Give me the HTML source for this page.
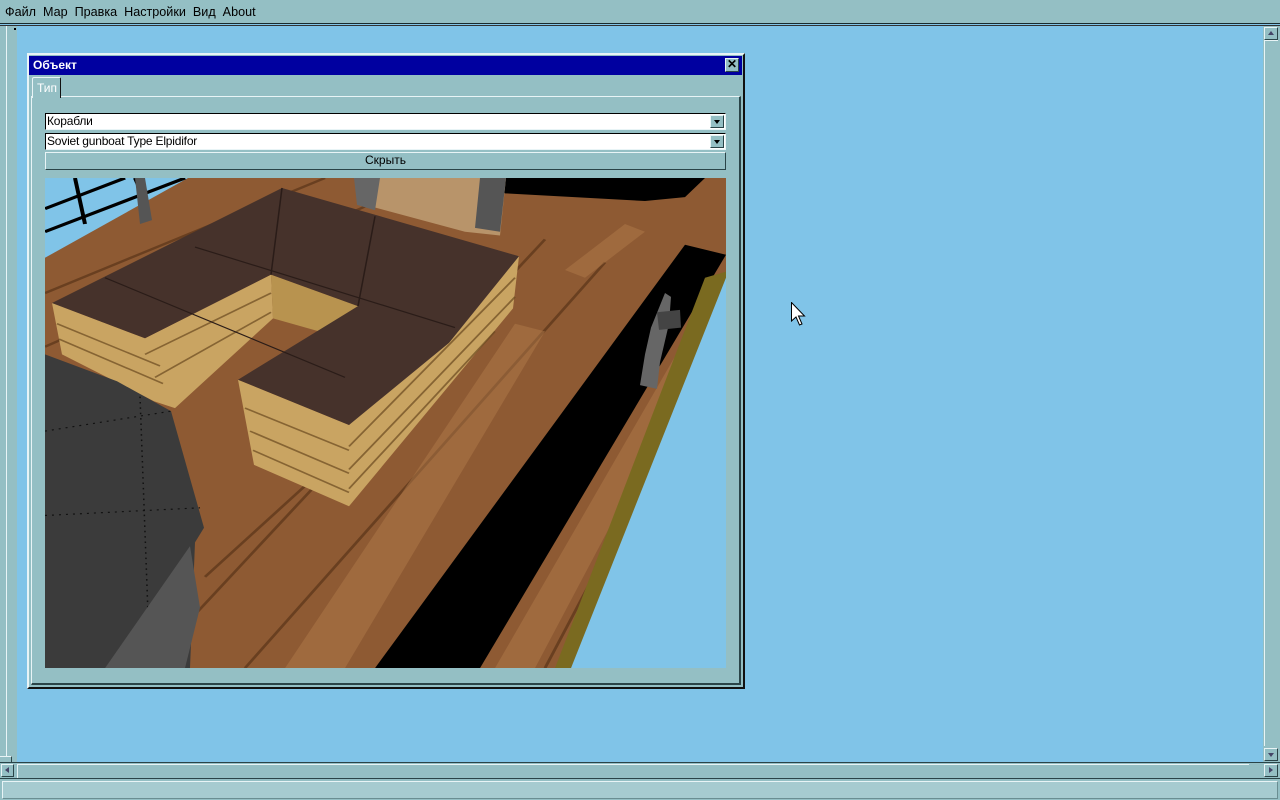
<!DOCTYPE html>
<html><head><meta charset="utf-8"><style>
*{margin:0;padding:0;box-sizing:border-box}
body{width:1280px;height:800px;position:relative;overflow:hidden;background:#80c4e8;font-family:"Liberation Sans",sans-serif;font-size:12px}
.a{position:absolute}
.t{background:#94bfc4}
.raise{border-top:1px solid #e8f4f6;border-left:1px solid #e8f4f6;border-right:1px solid #2a4448;border-bottom:1px solid #2a4448}
.combo{background:#fff;border-top:1px solid #000;border-left:1px solid #000;border-right:1px solid #e8f4f6;border-bottom:1px solid #e8f4f6;font-size:12px;line-height:14px;padding-left:1px;color:#000;letter-spacing:-0.2px}
.dd{position:absolute;right:1px;top:1px;width:14px;height:13px;background:#94bfc4;border-top:1px solid #e8f4f6;border-left:1px solid #e8f4f6;border-right:1px solid #2a4448;border-bottom:1px solid #2a4448}
.dd:after{content:"";position:absolute;left:3px;top:4px;border-left:3px solid transparent;border-right:3px solid transparent;border-top:4px solid #000}
</style></head><body>
<div class="a t" style="left:0;top:0;width:1280px;height:24px;border-bottom:1px solid #1a2a2c"></div>
<div class="a" style="left:5px;top:5px;font-size:12.6px;color:#000;white-space:nowrap">Файл&nbsp; Мар&nbsp; Правка&nbsp; Настройки&nbsp; Вид&nbsp; About</div>
<div class="a" style="left:0;top:25px;width:1280px;height:1px;background:#333"></div>
<div class="a t" style="left:0;top:26px;width:17px;height:737px"></div>
<div class="a" style="left:6px;top:26px;width:1px;height:730px;background:#e8f4f6"></div>
<div class="a" style="left:0;top:756px;width:12px;height:6px;border-top:1px solid #e8f4f6;border-right:1px solid #2a4448"></div>
<div class="a" style="left:14px;top:28px;width:2px;height:2px;background:#000"></div>
<div class="a t" style="left:1263px;top:26px;width:17px;height:737px"></div>
<div class="a t raise" style="left:1264px;top:27px;width:14px;height:13px"></div>
<div class="a" style="left:1268px;top:31px;border-left:3px solid transparent;border-right:3px solid transparent;border-bottom:4px solid #446"></div>
<div class="a t" style="left:1264px;top:40px;width:14px;height:706px;border-left:1px solid #e8f4f6;border-top:1px solid #e8f4f6"></div>
<div class="a t raise" style="left:1264px;top:748px;width:14px;height:13px"></div>
<div class="a" style="left:1268px;top:753px;border-left:3px solid transparent;border-right:3px solid transparent;border-top:4px solid #446"></div>
<div class="a t" style="left:0;top:762px;width:1280px;height:17px;border-top:1px solid #2a4448;border-bottom:1px solid #2a4448"></div>
<div class="a t raise" style="left:1px;top:764px;width:13px;height:13px"></div>
<div class="a" style="left:5px;top:767px;border-top:3px solid transparent;border-bottom:3px solid transparent;border-right:4px solid #446"></div>
<div class="a t" style="left:17px;top:764px;width:1232px;height:14px;border-left:1px solid #e8f4f6;border-top:1px solid #e8f4f6"></div>
<div class="a t raise" style="left:1264px;top:764px;width:14px;height:13px"></div>
<div class="a" style="left:1269px;top:767px;border-top:3px solid transparent;border-bottom:3px solid transparent;border-left:4px solid #446"></div>
<div class="a" style="left:0;top:779px;width:1280px;height:21px;background:#94bfc4"></div>
<div class="a" style="left:2px;top:781px;width:1276px;height:18px;background:#a6cbd0;border-top:1px solid #e8f4f6;border-left:1px solid #e8f4f6;border-right:1px solid #6a8e92;border-bottom:1px solid #6a8e92"></div>

<div class="a t" style="left:27px;top:53px;width:718px;height:636px;border-top:2px solid #e8f4f6;border-left:2px solid #e8f4f6;border-right:2px solid #111;border-bottom:2px solid #111"></div>
<div class="a" style="left:29px;top:56px;width:713px;height:19px;background:#0000a0"></div>
<div class="a" style="left:33px;top:58px;color:#fff;font-weight:bold;font-size:12px">Объект</div>
<div class="a t raise" style="left:725px;top:58px;width:14px;height:14px;font-weight:bold;font-size:12px;line-height:11px;text-align:center;color:#000">✕</div>
<div class="a t" style="left:31px;top:96px;width:710px;height:589px;border-top:1px solid #e8f4f6;border-left:1px solid #e8f4f6;border-right:2px solid #2a4448;border-bottom:2px solid #2a4448"></div>
<div class="a t" style="left:32px;top:77px;width:29px;height:21px;border-top:1px solid #e8f4f6;border-left:1px solid #e8f4f6;border-right:1px solid #111;border-radius:2px 2px 0 0;color:#fff;font-size:12px;padding:3px 0 0 4px">Тип</div>
<div class="a combo" style="left:45px;top:113px;width:681px;height:17px">Корабли<div class="dd"></div></div>
<div class="a combo" style="left:45px;top:133px;width:681px;height:17px">Soviet gunboat Type Elpidifor<div class="dd"></div></div>
<div class="a t raise" style="left:45px;top:152px;width:681px;height:18px;text-align:center;font-size:12px;line-height:15px;color:#000">Скрыть</div>
<svg class="a" style="left:45px;top:178px" width="681" height="490" viewBox="0 0 681 490">
<rect width="681" height="490" fill="#8e5a33"/>
<g transform="scale(1,0.767)">
<g stroke="#5a3518" stroke-width="3" opacity=".7">
<line x1="0" y1="150" x2="280" y2="0"/><line x1="0" y1="220" x2="350" y2="20"/>
<line x1="100" y1="639" x2="500" y2="80"/><line x1="200" y1="639" x2="560" y2="110"/>
<line x1="430" y1="639" x2="640" y2="160"/><line x1="500" y1="639" x2="670" y2="220"/>
<line x1="160" y1="520" x2="430" y2="200"/>
</g>
<g fill="#b07a4a" opacity=".5"><polygon points="240,639 300,639 500,200 470,190"/><polygon points="450,639 490,639 660,220 640,210"/><polygon points="520,120 580,60 600,70 540,130"/></g>
<polygon points="0,0 143,0 0,104" fill="#80c4e8"/>
<g stroke="#000" stroke-width="4"><line x1="0" y1="70" x2="140" y2="0"/><line x1="30" y1="0" x2="40" y2="60"/><line x1="0" y1="40" x2="80" y2="0"/><line x1="90" y1="0" x2="100" y2="30"/></g>
<polygon points="90,0 100,0 107,55 95,60" fill="#555"/>
<polygon points="440,0 660,0 640,25 600,30 460,20" fill="#000"/>
<polygon points="640,87 681,100 435,639 330,639" fill="#000"/>
<polygon points="660,130 681,122 681,150 540,639 510,639" fill="#7a6a20"/>
<polygon points="681,130 681,639 526,639" fill="#80c4e8"/>
<polygon points="309,0 461,0 455,75 420,70 320,35" fill="#b8946a"/>
<polygon points="309,0 335,0 330,42 312,35" fill="#666"/>
<polygon points="435,0 461,0 455,70 430,65" fill="#555"/>
<polygon points="7,163 100,209 226,126 228,183 130,300 109,291 70,265 17,230" fill="#c9a462"/>
<polygon points="226,126 313,167 274,200 228,183" fill="#b8934f"/>
<polygon points="193,263 304,322 474,102 468,170 304,428 209,374" fill="#c9a462"/>
<g stroke="#6a4a20" stroke-width="2" opacity=".7">
<line x1="12" y1="190" x2="115" y2="245"/><line x1="14" y1="210" x2="118" y2="268"/><line x1="100" y1="230" x2="226" y2="150"/><line x1="110" y1="260" x2="226" y2="175"/>
<line x1="200" y1="300" x2="304" y2="355"/><line x1="205" y1="330" x2="304" y2="385"/><line x1="208" y1="355" x2="304" y2="410"/>
<line x1="304" y1="350" x2="470" y2="130"/><line x1="304" y1="380" x2="470" y2="155"/><line x1="304" y1="405" x2="450" y2="200"/>
</g>
<polygon points="7,163 237,13 474,102 404,215 304,322 193,263 313,167 226,126 100,209" fill="#46322b"/>
<g stroke="#2a1c18" stroke-width="1.5"><line x1="150" y1="90" x2="410" y2="195"/><line x1="237" y1="13" x2="226" y2="126"/><line x1="330" y1="50" x2="313" y2="167"/><line x1="60" y1="130" x2="300" y2="260"/></g>
<polygon points="0,230 72,265 126,304 159,456 150,475 145,639 0,639" fill="#3b3b3b"/>
<g stroke="#111" stroke-width="1.5" stroke-dasharray="2 5"><line x1="0" y1="330" x2="126" y2="304"/><line x1="0" y1="440" x2="155" y2="430"/><line x1="95" y1="285" x2="105" y2="639"/></g>
<polygon points="145,480 155,560 140,639 60,639" fill="#555"/>
<polygon points="620,150 626,155 624,190 615,240 612,275 595,270 600,230 606,195" fill="#666"/>
<polygon points="612,175 635,172 636,195 614,198" fill="#444"/>
</g>
</svg>
<svg class="a" style="left:791px;top:302px" width="16" height="26" viewBox="0 0 16 26"><path d="M0.5 0.5 L0.5 19 L5 15 L8.5 23 L11 22 L7.5 14 L13.5 14 Z" fill="#fff" stroke="#000"/></svg>
</body></html>
